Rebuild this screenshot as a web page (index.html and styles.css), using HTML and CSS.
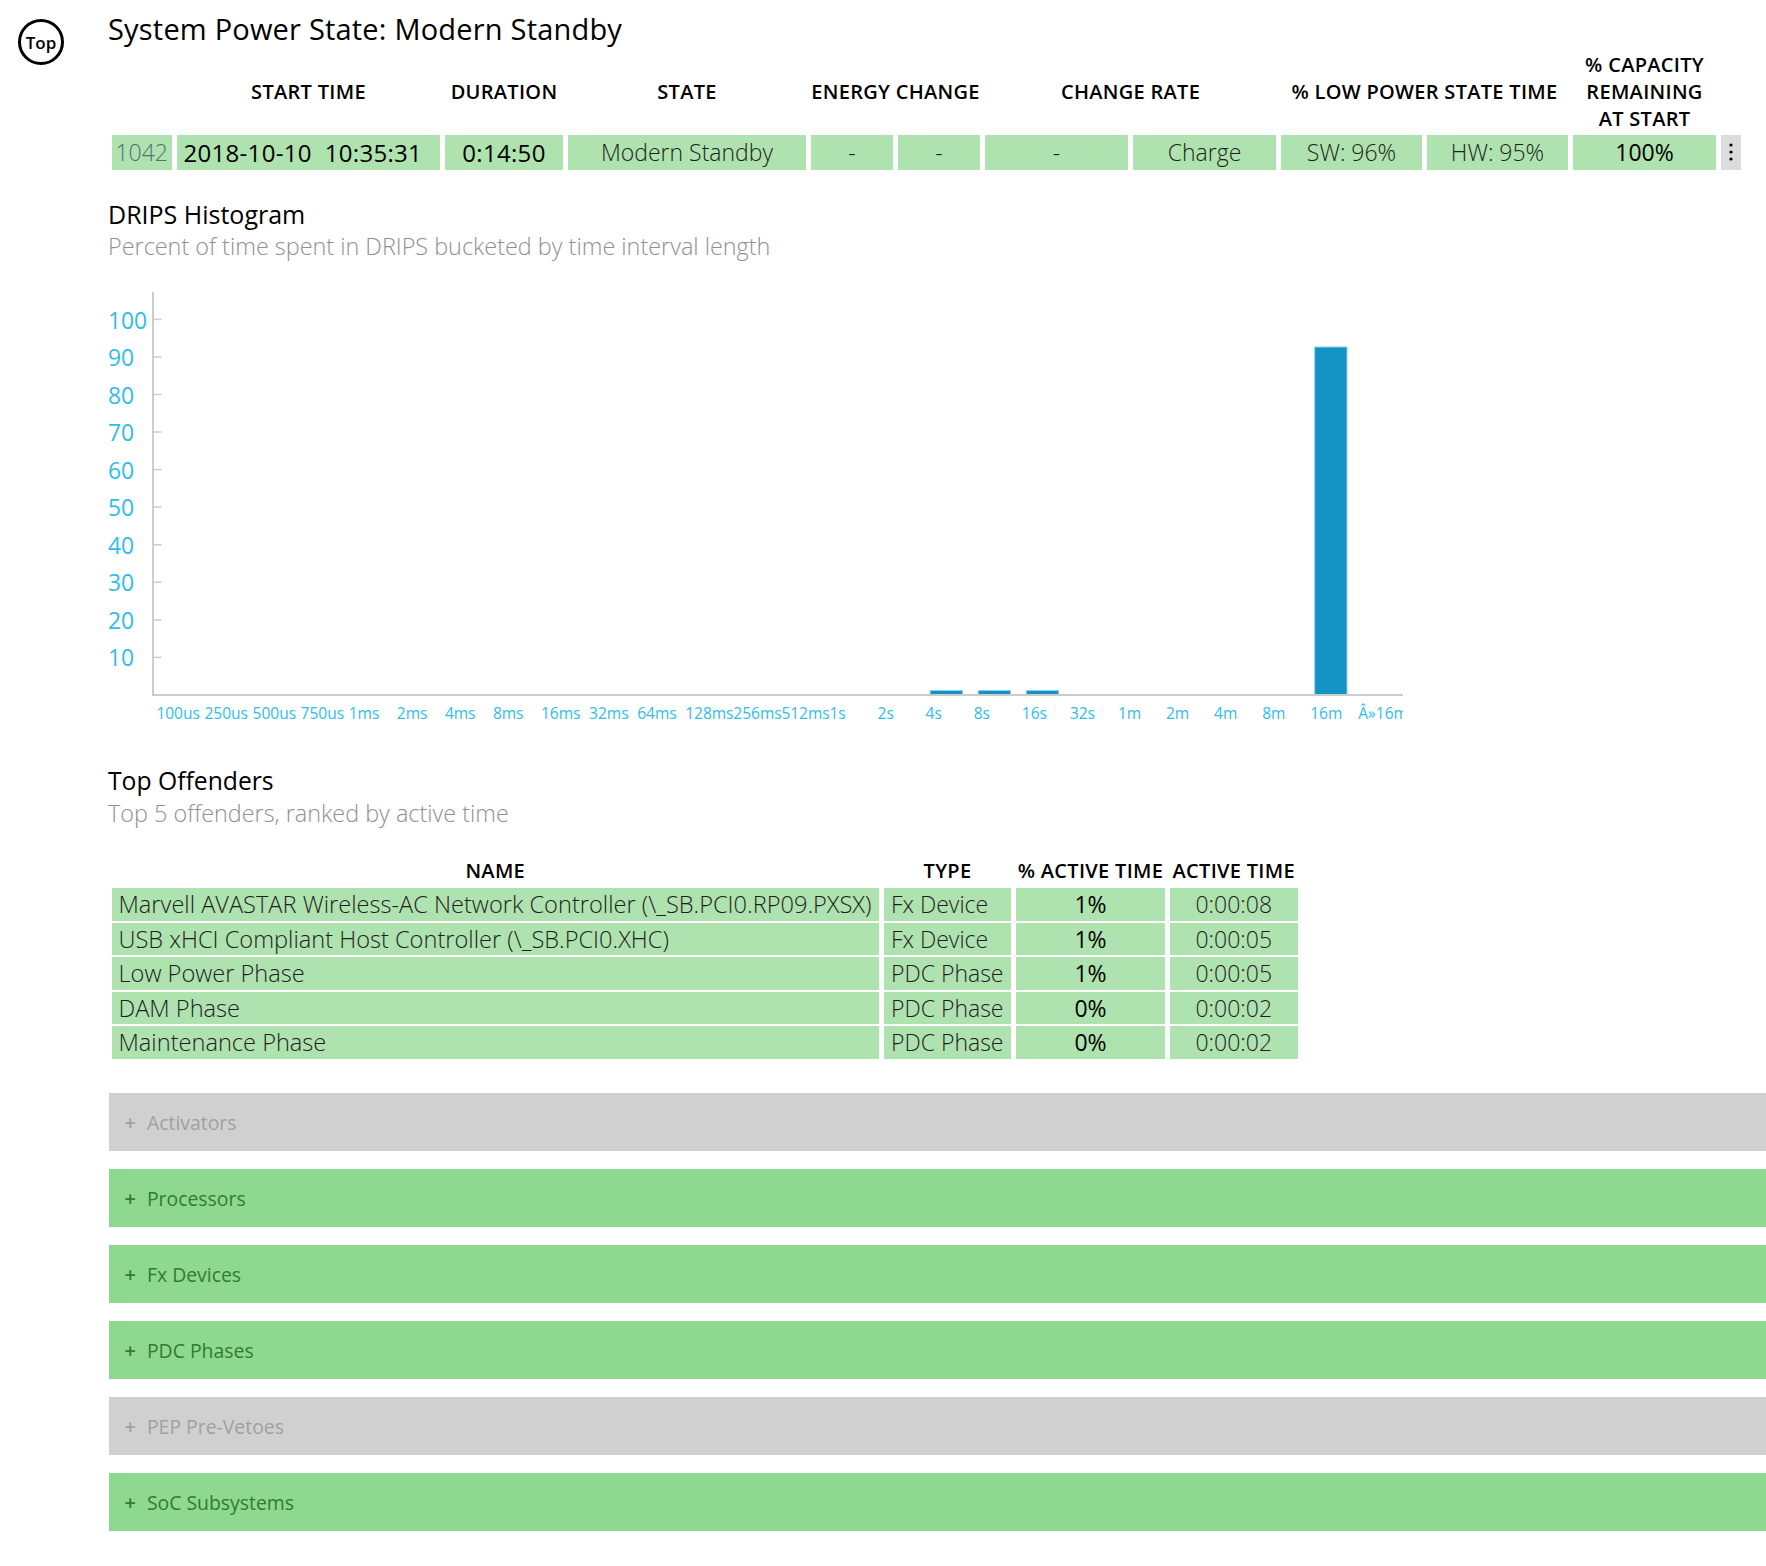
FILE: index.html
```html
<!DOCTYPE html>
<html lang="en">
<head>
<meta charset="utf-8">
<title>System Power State: Modern Standby</title>
<link rel="stylesheet" href="styles.css">
</head>
<body>
<div class="page">
  <nav class="side"><a class="top-btn" href="#">Top</a></nav>
  <main class="main">
    <h1 class="title">System Power State: Modern Standby</h1>

    <table class="summary">
      <colgroup>
        <col class="w-id"><col class="w-start"><col class="w-dur"><col class="w-state">
        <col class="w-e"><col class="w-e"><col class="w-r"><col class="w-r">
        <col class="w-sw"><col class="w-hw"><col class="w-cap"><col class="w-menu">
      </colgroup>
      <thead>
        <tr>
          <th></th>
          <th>START TIME</th>
          <th>DURATION</th>
          <th>STATE</th>
          <th colspan="2">ENERGY CHANGE</th>
          <th colspan="2">CHANGE RATE</th>
          <th colspan="2">% LOW POWER STATE TIME</th>
          <th>% CAPACITY<br>REMAINING<br>AT START</th>
          <th></th>
        </tr>
      </thead>
      <tbody>
        <tr>
          <td class="id">1042</td>
          <td class="rg big start">2018-10-10&nbsp;&nbsp;10:35:31</td>
          <td class="rg big">0:14:50</td>
          <td class="lt">Modern Standby</td>
          <td class="lt">-</td>
          <td class="lt">-</td>
          <td class="lt">-</td>
          <td class="lt">Charge</td>
          <td class="lt">SW: 96%</td>
          <td class="lt">HW: 95%</td>
          <td class="rg">100%</td>
          <td class="menu"><svg class="dots" width="6" height="20" viewBox="0 0 6 20"><circle cx="3" cy="3" r="1.6"/><circle cx="3" cy="10" r="1.6"/><circle cx="3" cy="17" r="1.6"/></svg></td>
        </tr>
      </tbody>
    </table>

    <h2 class="heading">DRIPS Histogram</h2>
    <div class="sub">Percent of time spent in DRIPS bucketed by time interval length</div>

    <svg class="chart" width="1295" height="440" viewBox="0 0 1295 440">
      <g class="ylabels">
        <text x="0" y="33">100</text>
        <text x="0" y="70.5">90</text>
        <text x="0" y="108">80</text>
        <text x="0" y="145.5">70</text>
        <text x="0" y="183">60</text>
        <text x="0" y="220.5">50</text>
        <text x="0" y="258">40</text>
        <text x="0" y="295.5">30</text>
        <text x="0" y="333">20</text>
        <text x="0" y="370.5">10</text>
      </g>
      <g class="ticks">
        <line x1="46" x2="53.5" y1="32.4" y2="32.4"/>
        <line x1="46" x2="53.5" y1="70" y2="70"/>
        <line x1="46" x2="53.5" y1="107.5" y2="107.5"/>
        <line x1="46" x2="53.5" y1="145" y2="145"/>
        <line x1="46" x2="53.5" y1="182.6" y2="182.6"/>
        <line x1="46" x2="53.5" y1="220" y2="220"/>
        <line x1="46" x2="53.5" y1="257.8" y2="257.8"/>
        <line x1="46" x2="53.5" y1="295.3" y2="295.3"/>
        <line x1="46" x2="53.5" y1="333" y2="333"/>
        <line x1="46" x2="53.5" y1="370.4" y2="370.4"/>
      </g>
      <g class="bars-g">
        <rect x="822.1" y="403.5" width="32.3" height="4"/>
        <rect x="870.2" y="403.5" width="32.3" height="4"/>
        <rect x="918.3" y="403.5" width="32.3" height="4"/>
        <rect x="1206.7" y="60" width="32.3" height="347.5"/>
      </g>
      <line class="axis" x1="45" y1="5" x2="45" y2="409"/>
      <line class="axis" x1="44" y1="408" x2="1295" y2="408"/>
      <g class="xlabels">
        <text x="48.4" y="432">100us</text>
        <text x="96.5" y="432">250us</text>
        <text x="144.6" y="432">500us</text>
        <text x="192.6" y="432">750us</text>
        <text x="240.7" y="432">1ms</text>
        <text x="288.8" y="432">2ms</text>
        <text x="336.9" y="432">4ms</text>
        <text x="384.9" y="432">8ms</text>
        <text x="433" y="432">16ms</text>
        <text x="481.1" y="432">32ms</text>
        <text x="529.2" y="432">64ms</text>
        <text x="577.2" y="432">128ms</text>
        <text x="625.3" y="432">256ms</text>
        <text x="673.4" y="432">512ms</text>
        <text x="721.5" y="432">1s</text>
        <text x="769.6" y="432">2s</text>
        <text x="817.6" y="432">4s</text>
        <text x="865.7" y="432">8s</text>
        <text x="913.8" y="432">16s</text>
        <text x="961.9" y="432">32s</text>
        <text x="1009.9" y="432">1m</text>
        <text x="1058" y="432">2m</text>
        <text x="1106.1" y="432">4m</text>
        <text x="1154.2" y="432">8m</text>
        <text x="1202.2" y="432">16m</text>
        <text x="1250.3" y="432">Â»16m</text>
      </g>
    </svg>

    <h2 class="heading offenders-h">Top Offenders</h2>
    <div class="sub">Top 5 offenders, ranked by active time</div>

    <table class="offenders">
      <colgroup>
        <col class="w-name"><col class="w-type"><col class="w-pct"><col class="w-time">
      </colgroup>
      <thead>
        <tr><th>NAME</th><th>TYPE</th><th>% ACTIVE TIME</th><th>ACTIVE TIME</th></tr>
      </thead>
      <tbody>
        <tr><td class="name lt">Marvell AVASTAR Wireless-AC Network Controller (\_SB.PCI0.RP09.PXSX)</td><td class="type lt">Fx Device</td><td class="rg">1%</td><td class="lt">0:00:08</td></tr>
        <tr><td class="name lt">USB xHCI Compliant Host Controller (\_SB.PCI0.XHC)</td><td class="type lt">Fx Device</td><td class="rg">1%</td><td class="lt">0:00:05</td></tr>
        <tr><td class="name lt">Low Power Phase</td><td class="type lt">PDC Phase</td><td class="rg">1%</td><td class="lt">0:00:05</td></tr>
        <tr><td class="name lt">DAM Phase</td><td class="type lt">PDC Phase</td><td class="rg">0%</td><td class="lt">0:00:02</td></tr>
        <tr><td class="name lt">Maintenance Phase</td><td class="type lt">PDC Phase</td><td class="rg">0%</td><td class="lt">0:00:02</td></tr>
      </tbody>
    </table>

    <div class="sections">
      <div class="sec off"><span class="plus">+</span>Activators</div>
      <div class="sec on"><span class="plus">+</span>Processors</div>
      <div class="sec on"><span class="plus">+</span>Fx Devices</div>
      <div class="sec on"><span class="plus">+</span>PDC Phases</div>
      <div class="sec off"><span class="plus">+</span>PEP Pre-Vetoes</div>
      <div class="sec on"><span class="plus">+</span>SoC Subsystems</div>
    </div>
  </main>
</div>
</body>
</html>
```

FILE: styles.css
```css
html, body {
  margin: 0;
  padding: 0;
  background: #ffffff;
}

body {
  font-family: "Open Sans", "Noto Sans", "Liberation Sans", sans-serif;
  color: #000000;
  overflow: hidden;
}

.page {
  display: flex;
  align-items: flex-start;
}

.side {
  width: 108px;
  flex: none;
}

.top-btn {
  display: flex;
  align-items: center;
  justify-content: center;
  box-sizing: border-box;
  width: 46px;
  height: 46px;
  margin: 19px 0 0 18px;
  border: 3px solid #000;
  border-radius: 50%;
  font-size: 17px;
  font-weight: 600;
  color: #000;
  text-decoration: none;
}

.main {
  flex: 1;
  min-width: 0;
}

.title {
  margin: 9px 0 0;
  font-size: 29px;
  line-height: 40px;
  font-weight: 400;
  letter-spacing: 0.2px;
}

/* summary table */
.summary {
  table-layout: fixed;
  width: 1639.5px;
  border-collapse: separate;
  border-spacing: 5px 3px;
  margin: -1.5px 0 0 -1.5px;
}

.w-id { width: 60.5px; }
.w-start { width: 263px; }
.w-dur { width: 118px; }
.w-state { width: 238px; }
.w-e { width: 82px; }
.w-r { width: 143px; }
.w-sw { width: 141px; }
.w-hw { width: 141px; }
.w-cap { width: 143px; }
.w-menu { width: 20px; }

.summary th,
.offenders th {
  padding: 0;
  font-size: 20px;
  font-weight: 600;
  line-height: 27px;
  white-space: nowrap;
  letter-spacing: 0.3px;
  color: #000;
}

.summary th {
  vertical-align: middle;
}

.summary td {
  height: 35px;
  padding: 0;
  font-size: 23px;
  line-height: 35px;
  text-align: center;
  white-space: nowrap;
  background: #aee2ae;
}

.summary td.big {
  font-size: 24px;
  letter-spacing: 0.3px;
}

.summary td.start {
  text-align: left;
  padding-left: 6.5px;
}

.lt {
  font-weight: 300;
  color: #1e1e1e;
}

.rg {
  font-weight: 400;
  color: #000;
}

td.id {
  font-weight: 300;
  color: #4f7272;
}

.summary td.menu {
  background: #dcdcdc;
  vertical-align: middle;
}

.dots {
  display: block;
  margin: 0 auto;
  fill: #000;
}

/* headings */
.heading {
  margin: 25px 0 0;
  font-size: 25px;
  line-height: 32px;
  font-weight: 400;
}

.offenders-h {
  margin-top: 38px;
  font-size: 24.7px;
}

.sub {
  font-size: 23.4px;
  line-height: 32px;
  font-weight: 300;
  color: #909090;
}

/* chart */
.chart {
  display: block;
  margin-top: 25px;
  overflow: hidden;
}

.chart text {
  font-family: "Open Sans", "Noto Sans", "Liberation Sans", sans-serif;
  fill: #2dbdf0;
}

.ylabels text {
  font-size: 22.8px;
  dominant-baseline: central;
}

.xlabels text {
  font-size: 15.5px;
}

.ticks line {
  stroke: #cccccc;
  stroke-width: 1.5;
}

.axis {
  stroke: #cccccc;
  stroke-width: 2;
}

.bars-g rect {
  fill: #1592c4;
  stroke: #8fd0ea;
  stroke-width: 1;
}

/* offenders table */
.offenders {
  table-layout: fixed;
  width: 1196px;
  border-collapse: separate;
  border-spacing: 5px 2.5px;
  margin: 26.5px 0 0 -1.5px;
}

.w-name { width: 767.5px; }
.w-type { width: 127px; }
.w-pct { width: 149px; }
.w-time { width: 127.5px; }

.offenders th {
  vertical-align: bottom;
  padding-bottom: 2.3px;
}

.offenders td {
  height: 32.5px;
  padding: 0;
  font-size: 23px;
  line-height: 32.5px;
  text-align: center;
  white-space: nowrap;
  background: #aee2ae;
}

.offenders td.name {
  text-align: left;
  padding-left: 7px;
  font-size: 23.6px;
}

.offenders td.type {
  text-align: left;
  padding-left: 7px;
}

/* collapsible sections */
.sections {
  display: flex;
  flex-direction: column;
  gap: 18.5px;
  margin: 32.5px 0 0 1px;
}

.sec {
  display: flex;
  align-items: center;
  height: 57.5px;
  padding-left: 15.5px;
  font-size: 19.4px;
  font-weight: 400;
}

.sec.off {
  background: #d0d0d0;
  color: #a0a0a0;
}

.sec.on {
  background: #8fd88f;
  color: #2f7d2f;
}

.plus {
  margin-right: 11px;
  font-size: 20px;
  font-weight: 600;
}
```
